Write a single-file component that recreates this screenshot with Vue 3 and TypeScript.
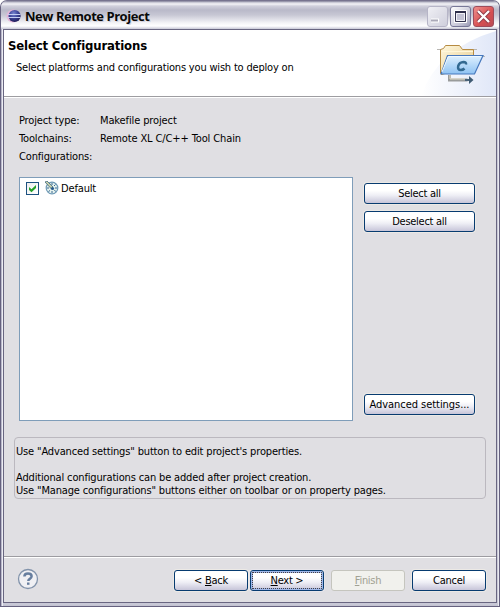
<script setup lang="ts">
import { ref } from 'vue'

interface Detail { label: string; value: string }

const details: Detail[] = [
  { label: 'Project type:', value: 'Makefile project' },
  { label: 'Toolchains:', value: 'Remote XL C/C++ Tool Chain' },
]
const checked = ref(true)
</script>

<template>
  <div class="window">
    <header class="titlebar">
      <svg class="eclipse" width="16" height="16" viewBox="0 0 16 16">
        <defs>
          <radialGradient id="orb" cx=".42" cy=".3" r=".7">
            <stop offset="0" stop-color="#7784d0" /><stop offset=".5" stop-color="#40489c" /><stop offset="1" stop-color="#211c59" />
          </radialGradient>
        </defs>
        <circle cx="7" cy="8" r="6.5" fill="#e5b5d7" />
        <circle cx="8.6" cy="8" r="6.1" fill="url(#orb)" />
        <path d="M1.5 6.5h13M1.5 9.5h13" stroke="#c6cff4" stroke-width="1" />
      </svg>
      <span class="title">New Remote Project</span>
      <div class="controls">
        <button class="ctl min" aria-label="Minimize"><svg width="21" height="21"><path d="M4 14.5h8" stroke="#fff" stroke-width="4" /><path d="M4 14.5h7" stroke="#aaa9b8" stroke-width="2" /></svg></button>
        <button class="ctl max" aria-label="Maximize"><svg width="21" height="21"><path d="M4.5 4.5h12v12h-12z" fill="none" stroke="#fff" /><path d="M5.5 5.5h10v10h-10z" fill="#c3c3d4" stroke="#30314c" /><path d="M5 6h11" stroke="#30314c" stroke-width="2" /><path d="M6.500 7.500h8v7h-8z" fill="none" stroke="#f2f2f7" /></svg></button>
        <button class="ctl close" aria-label="Close"><svg width="21" height="21"><path d="M5 5l11 11M16 5L5 16" stroke="#8d3b48" stroke-width="4" /><path d="M5 5l11 11M16 5L5 16" stroke="#fff" stroke-width="2.3" /></svg></button>
      </div>
    </header>

    <div class="client">
      <section class="banner">
        <div class="banner-text">
          <h1>Select Configurations</h1>
          <p>Select platforms and configurations you wish to deploy on</p>
        </div>
        <svg class="banner-art" width="75" height="66" viewBox="421 30 75 66">
          <defs>
            <linearGradient id="sky" x1="0" x2="1"><stop offset="0" stop-color="#fff" /><stop offset="1" stop-color="#e0e7f8" /></linearGradient>
            <linearGradient id="manila" x1="0" y1="0" x2="1" y2="1"><stop offset="0" stop-color="#fff8df" /><stop offset="1" stop-color="#e5c989" /></linearGradient>
            <linearGradient id="flap" x1="0" y1="0" x2="0" y2="1"><stop offset="0" stop-color="#e0f1ff" /><stop offset="1" stop-color="#8fc3f3" /></linearGradient>
          </defs>
          <path d="M421 96Q438 48 496 31V96Z" fill="url(#sky)" />
          <path d="M437 49.500h40M474 56.500h11" stroke="#b9b7b3" />
          <path d="M440.500 73V49.500l3-1 2-3h14l3 4h11v16l-32 9z" fill="url(#manila)" stroke="#b68b42" />
          <path d="M442 51.500h31" stroke="#fff7d9" />
          <path d="M447.500 55.500h35.500l-8.500 18.500h-33.500z" fill="url(#flap)" stroke="#4778bd" stroke-width="1.2" />
          <path d="M448.500 56.500h32M448 57l-6 15" fill="none" stroke="#eff8ff" />
          <path d="M466 64.500q.5-2.500-2.500-2.500-4 .2-5.300 4-.8 4 2.600 4 2.200 0 3.700-1.500" fill="none" stroke="#326991" stroke-width="2.500" />
          <path d="M449.500 75v5h18" fill="none" stroke="#999b9b" stroke-width="3" />
          <path d="M450 75v4h15" fill="none" stroke="#e6dfc9" />
          <path d="M465 80h5" stroke="#49637a" stroke-width="2" /><path d="M469 76l4.500 4-4.500 4z" fill="#3f5b73" />
        </svg>
      </section>

      <main class="content">
        <dl class="details">
          <template v-for="item in details" :key="item.label">
            <dt>{{ item.label }}</dt><dd>{{ item.value }}</dd>
          </template>
          <dt>Configurations:</dt>
        </dl>

        <div class="selection">
          <div class="listbox">
            <div class="entry">
              <button class="check" role="checkbox" :aria-checked="checked" @click="checked = !checked">
                <svg v-if="checked" width="11" height="11"><path d="M2 4v3l2.500 2.300L9 5V2L4.500 6.300z" fill="#24a127" /></svg>
              </button>
              <svg class="gauge" width="14" height="14" viewBox="0 0 14 14">
                <circle cx="7" cy="7" r="5.800" fill="#e4f1ed" stroke="#6d99b5" stroke-width="1.200" />
                <path d="M7 2v2M12 7h-2M7 12v-2M2 7h2M3.500 10.500l1.500-1M10.500 10.500L9.500 9M10.500 3.500L9 5" stroke="#3a6993" />
                <path d="M0 1l2-1 6 6-1.500 2z" fill="#c5cfaa" stroke="#40677e" stroke-width=".8" />
                <circle cx="7.500" cy="7.500" r="1.600" fill="#285b8e" />
              </svg>
              <span>Default</span>
            </div>
          </div>
          <div class="actions">
            <button class="btn"><span>Select all</span></button>
            <button class="btn"><span>Deselect all</span></button>
            <button class="btn advanced"><span>Advanced settings...</span></button>
          </div>
        </div>

        <div class="hint">
          <p>Use "Advanced settings" button to edit project's properties.</p>
          <p></p>
          <p>Additional configurations can be added after project creation.</p>
          <p>Use "Manage configurations" buttons either on toolbar or on property pages.</p>
        </div>
      </main>

      <footer class="footer">
        <svg class="help" width="22" height="22" viewBox="0 0 22 22">
          <circle cx="11" cy="11" r="9.500" fill="#f0f0f4" stroke="#8293ab" stroke-width="1.300" />
          <path d="M7.400 8.600q0-3.200 3.600-3.200t3.600 2.900q0 1.500-1.800 2.500-1.500.8-1.500 2.300" fill="none" stroke="#677e9f" stroke-width="2.500" />
          <path d="M10 14.500h2.500v2.300H10z" fill="#677e9f" />
        </svg>
        <button class="btn back"><span>&lt; <u>B</u>ack</span></button>
        <button class="btn next"><span><u>N</u>ext &gt;</span></button>
        <button class="btn finish" disabled><span><u>F</u>inish</span></button>
        <button class="btn cancel"><span>Cancel</span></button>
      </footer>
    </div>
  </div>
</template>

<style>
body { background: #fff; }
</style>

<style scoped>
* { box-sizing: border-box; }
.window {
  width: 500px; height: 607px; padding: 0 3px 3px; overflow: hidden;
  display: flex; flex-direction: column;
  border: 1px solid #65617f; border-top-color: #77748f; border-radius: 7px 7px 0 0;
  background: #c8c8d6; color: #000;
  box-shadow: inset 1px 0 #b9b8ca, inset 2px 0 #ececf3, inset -1px 0 #e9e9ef, inset 0 -1px #c3c3d1;
  font: 11px/13px 'DejaVu Sans Condensed', 'DejaVu Sans', sans-serif;
  letter-spacing: -.155px;
}
.titlebar {
  height: 28px; flex: none; display: flex; align-items: flex-start; margin: 0 -3px; padding: 5px 5px 0;
  background: linear-gradient(#77758e 0, #bcbccb 1px, #f4f4f7 3px, #d0d0dc 5px, #b9b9c9 9px, #c7c7d4 14px, #f4f4f7 22px, #fff 25px, #c8c8d6 28px);
}
.eclipse { margin-top: 2px; }
.title { margin: 2px 0 0 3px; font: bold 13px/16px 'Open Sans', sans-serif; letter-spacing: -.46px; white-space: nowrap; color: #090909; text-shadow: 1px 1px #d1d1dc; }
.controls { display: flex; gap: 2px; margin-left: auto; }
.ctl { width: 21px; height: 21px; padding: 0; border: 1px solid #777797; border-radius: 3px; background: linear-gradient(135deg, #fff, #bdbdd0 75%, #9999b3); overflow: hidden; }
.ctl svg { display: block; margin: -1px; }
.min { border-color: #b6b5c7; background: linear-gradient(135deg, #f0f0f5, #cfcfdc); }
.close { border-color: #9d4c5b; background: linear-gradient(135deg, #ef8f8c, #d64f52 60%, #b94b54); }
.client { flex: 1; min-height: 0; display: flex; flex-direction: column; border: 1px solid #696681; margin: 0 -1px; background: #e0dfe3; }
.banner { height: 67px; flex: none; display: flex; justify-content: space-between; background: #fff; border-bottom: 1px solid #9e9da1; box-shadow: 0 1px #fff; }
.banner-text { padding: 8px 0 0 4px; }
h1, p { margin: 0; white-space: nowrap; }
h1 { font: bold 13px/16px 'DejaVu Sans Condensed', sans-serif; }
.banner-text p { margin: 7px 0 0 8px; letter-spacing: -.19px; }
.content { padding: 17px 10px 0; height: 459px; flex: none; }
.details { margin: 0 0 0 5px; display: grid; grid-template-columns: 81px 1fr; grid-auto-rows: 18px; white-space: nowrap; }
.details dd, .details dt { margin: 0; }
.details dd { letter-spacing: -.12px; }
.selection { display: flex; gap: 11px; margin: 9px 0 0 5px; height: 244px; }
.listbox { width: 334px; height: 244px; border: 1px solid #7f9db9; background: #fff; padding: 3px 6px; }
.entry { display: flex; height: 14px; align-items: center; }
.check { width: 13px; height: 13px; border: 1px solid #1c5180; background: linear-gradient(135deg, #eee, #fff); padding: 0; }
.check svg { display: block; }
.gauge { margin: 0 2px 0 6px; }
.actions { display: flex; flex-direction: column; width: 111px; padding: 6px 0; gap: 7px; }
.btn {
  height: 21px; padding: 0; border: 1px solid #073b70; border-radius: 3px;
  background: linear-gradient(#fff 0, #fff 35%, #eeeef5 60%, #c7c5d9 100%);
  box-shadow: 0 0 0 1px #ece9e5; font: inherit; letter-spacing: -.28px; color: #000; white-space: nowrap;
  display: flex; align-items: center; justify-content: center;
}
.advanced { margin-top: auto; letter-spacing: -.05px; }
.hint { margin-top: 16px; height: 62px; border: 1px solid #bbb8bf; border-radius: 4px; padding: 7px 1px; }
.hint p { height: 13px; }
.footer { flex: 1; border-top: 1px solid #9d9ca1; box-shadow: inset 0 1px #fff; display: flex; padding: 13px 10px 0 13px; }
.help { margin-top: -2px; }
.footer .btn { width: 74px; }
.back { margin-left: auto; }
.next { margin-left: 2px; outline: 1px dotted #473f42; outline-offset: -3px; box-shadow: inset 0 0 0 2px #9fb7e8, 0 0 0 1px #e7e5ea; }
.finish { margin-left: 7px; }
.cancel { margin-left: 7px; }
.btn:disabled { border-color: #c5c5be; color: #a1a192; background: #f1f1ed; box-shadow: none; }
u { text-underline-offset: 1px; text-decoration-thickness: 1px; }
</style>
